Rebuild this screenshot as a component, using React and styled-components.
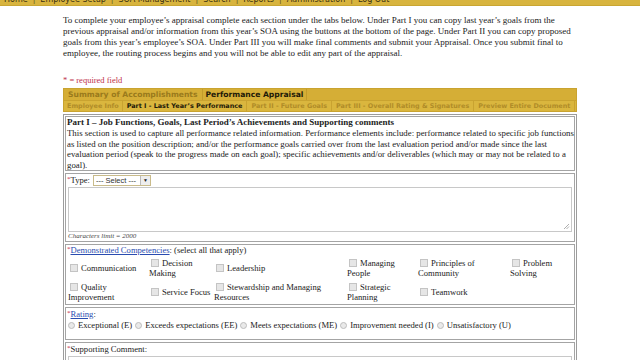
import styled, { createGlobalStyle } from "styled-components";

const Global = createGlobalStyle`
  html, body {
    margin: 0;
    padding: 0;
    background: #fff;
  }
  body {
    font-family: "Liberation Serif", "Times New Roman", serif;
    color: #222;
  }
  * {
    box-sizing: border-box;
  }
`;

const TopNav = styled.div`
  height: 6px;
  background: #d8b43e;
  overflow: hidden;
  border-bottom: 1px solid #c9a632;
`;

const NavLine = styled.div`
  display: flex;
  margin-top: -5px;
  padding-left: 4px;
  font-family: "DejaVu Sans", Verdana, sans-serif;
  font-size: 8px;
  line-height: 10px;
  color: #3a3010;
  white-space: nowrap;

  span + span::before {
    content: "|";
    margin: 0 5px;
    color: #6a5a20;
  }
`;

const Content = styled.div`
  margin-left: 63px;
  width: 514px;
`;

const Intro = styled.p`
  margin: 9px 0 0;
  font-size: 9px;
  line-height: 11px;
  color: #222;
`;

const Required = styled.div`
  margin-top: 16px;
  font-size: 8.5px;
  line-height: 10px;
  color: #c0304a;
`;

const TabRow = styled.div`
  display: flex;
  align-items: center;
  margin-top: ${(p) => (p.$first ? "3px" : "0")};
  height: ${(p) => p.$h}px;
  background: ${(p) => p.$bg};
  border: 1px solid #c9a330;
  border-top: ${(p) => (p.$first ? "1px solid #c9a330" : "none")};
  font-family: "DejaVu Sans", Verdana, sans-serif;
  font-weight: bold;
  white-space: nowrap;
  overflow: hidden;
`;

const MainTab = styled.div`
  padding: 0 ${(p) => p.$pad}px;
  height: 100%;
  display: flex;
  align-items: center;
  font-size: 7.6px;
  color: ${(p) => (p.$active ? "#1e1a08" : "#9a7a1c")};
  border-right: 1px solid #c29c2a;
`;

const SubTab = styled.div`
  padding: 0 ${(p) => p.$pad}px;
  height: 100%;
  display: flex;
  align-items: center;
  font-size: 6.45px;
  color: ${(p) => (p.$active ? "#1e1a08" : "#b08c28")};
  border-right: 1px solid #c9a330;
`;

const FormBox = styled.div`
  margin-top: 2px;
  border: 1px solid #9c9c9c;
  padding: 1px;
  display: flex;
  flex-direction: column;
  gap: 2px;
`;

const Section = styled.div`
  border: 1px solid #a4a4a4;
  padding: ${(p) => p.$pad || "1px 1px 2px"};
  font-size: 8.6px;
  line-height: 10.5px;
`;

const Desc = styled.div`
  font-size: 8.8px;
  line-height: 10.5px;
  margin-right: -1px;
`;

const Heading = styled.div`
  font-weight: bold;
  font-size: 9px;
  line-height: 11px;
`;

const Star = styled.span`
  color: #c0304a;
  font-size: 7px;
  vertical-align: top;
  line-height: 8px;
`;

const TypeRow = styled.div`
  display: flex;
  align-items: center;
  gap: 3px;
  height: 13px;
  font-size: 8.6px;
`;

const Select = styled.div`
  display: flex;
  align-items: stretch;
  height: 11px;
  border: 1px solid #c9bb8a;
  background: #fff;
  font-family: "Liberation Sans", Arial, sans-serif;
  font-size: 7.5px;
  line-height: 9px;
  color: #333;
`;

const SelectText = styled.span`
  padding: 0 4px 0 2px;
`;

const SelectBtn = styled.span`
  width: 10px;
  border-left: 1px solid #bbb;
  background: #eee;
  display: flex;
  align-items: center;
  justify-content: center;
  font-size: 5px;
  color: #222;
`;

const TextArea = styled.div`
  position: relative;
  height: 45px;
  margin: 0 1px;
  border: 1px solid #c8c8c8;
  background: #fff;
`;

const Grip = styled.svg`
  position: absolute;
  right: 1px;
  bottom: 1px;
`;

const Limit = styled.div`
  font-style: italic;
  font-size: 7px;
  line-height: 8px;
  color: #444;
  padding-left: 1px;
`;

const Link = styled.span`
  color: #2a4cb0;
  text-decoration: underline;
`;

const CompGrid = styled.div`
  display: grid;
  grid-template-columns: 81px 65px 133px 71px 92px 1fr;
  grid-auto-rows: 24px;
  align-items: center;
  padding-left: 1px;
`;

const Cell = styled.div`
  font-size: 8.6px;
  line-height: 10px;
`;

const Box = styled.span`
  display: inline-block;
  width: 8px;
  height: 8px;
  margin: 0 3px 0 2px;
  border: 1px solid #c4c4c4;
  background: #e6e6e6;
  vertical-align: -1px;
`;

const RadioRow = styled.div`
  display: flex;
  align-items: center;
  gap: 3px;
  padding: 1px 0 6px 1px;
  white-space: nowrap;
`;

const Radio = styled.span`
  display: inline-block;
  width: 7px;
  height: 7px;
  border-radius: 50%;
  border: 1px solid #bdbdbd;
  background: #e9e9e9;
  margin-right: 3px;
  vertical-align: -1px;
`;

const Comment = styled.div`
  height: 14px;
  margin: 2px 1px 0;
  border: 1px solid #c8c8c8;
  border-bottom: none;
`;

const nav = ["Home", "Employee Setup", "SOA Management", "Search", "Reports", "Administration", "Log Out"];

const competencies = [
  "Communication",
  "Decision Making",
  "Leadership",
  "Managing People",
  "Principles of Community",
  "Problem Solving",
  "Quality Improvement",
  "Service Focus",
  "Stewardship and Managing Resources",
  "Strategic Planning",
  "Teamwork",
];

const ratings = [
  "Exceptional (E)",
  "Exceeds expectations (EE)",
  "Meets expectations (ME)",
  "Improvement needed (I)",
  "Unsatisfactory (U)",
];

export default function App() {
  return (
    <>
      <Global />
      <TopNav>
        <NavLine>
          {nav.map((n) => (
            <span key={n}>{n}</span>
          ))}
        </NavLine>
      </TopNav>
      <Content>
        <Intro>
          To complete your employee’s appraisal complete each section under the tabs below. Under Part I you can copy
          last year’s goals from the previous appraisal and/or information from this year’s SOA using the buttons at the
          bottom of the page. Under Part II you can copy proposed goals from this year’s employee’s SOA. Under Part III you
          will make final comments and submit your Appraisal. Once you submit final to employee, the routing process begins
          and you will not be able to edit any part of the appraisal.
        </Intro>
        <Required>* = required field</Required>

        <TabRow $h={13} $bg="#d5ae36" $first>
          <MainTab $pad={4}>Summary of Accomplishments</MainTab>
          <MainTab $pad={3} $active>
            Performance Appraisal
          </MainTab>
        </TabRow>
        <TabRow $h={11} $bg="#dab63e">
          <SubTab $pad={3}>Employee Info</SubTab>
          <SubTab $pad={4} $active>
            Part I - Last Year’s Performance
          </SubTab>
          <SubTab $pad={4}>Part II - Future Goals</SubTab>
          <SubTab $pad={4}>Part III - Overall Rating &amp; Signatures</SubTab>
          <SubTab $pad={4}>Preview Entire Document</SubTab>
        </TabRow>

        <FormBox>
          <Section $pad="0 1px">
            <Heading>Part I – Job Functions, Goals, Last Period’s Achievements and Supporting comments</Heading>
            <Desc>
              This section is used to capture all performance related information. Performance elements include:
              performance related to specific job functions as listed on the position description; and/or the
              performance goals carried over from the last evaluation period and/or made since the last evaluation period
              (speak to the progress made on each goal); specific achievements and/or deliverables (which may or may not be
              related to a goal).
            </Desc>
          </Section>

          <Section $pad="0 1px 1px">
            <TypeRow>
              <span>
                <Star>*</Star>Type:
              </span>
              <Select>
                <SelectText>--- Select ---</SelectText>
                <SelectBtn>▼</SelectBtn>
              </Select>
            </TypeRow>
            <TextArea>
              <Grip width="7" height="7" viewBox="0 0 7 7">
                <path d="M6 1L1 6M6 3.5L3.5 6" stroke="#999" strokeWidth="0.8" />
              </Grip>
            </TextArea>
            <Limit>Characters limit = 2000</Limit>
          </Section>

          <Section $pad="0 1px">
            <div>
              <Star>*</Star>
              <Link>Demonstrated Competencies</Link>: (select all that apply)
            </div>
            <CompGrid>
              {competencies.map((c) => (
                <Cell key={c}>
                  <Box />
                  {c}
                </Cell>
              ))}
            </CompGrid>
          </Section>

          <Section>
            <div>
              <Star>*</Star>
              <Link>Rating</Link>:
            </div>
            <RadioRow>
              {ratings.map((r) => (
                <span key={r}>
                  <Radio />
                  {r}
                </span>
              ))}
            </RadioRow>
          </Section>

          <Section>
            <div>
              <Star>*</Star>Supporting Comment:
            </div>
            <Comment />
          </Section>
        </FormBox>
      </Content>
    </>
  );
}
